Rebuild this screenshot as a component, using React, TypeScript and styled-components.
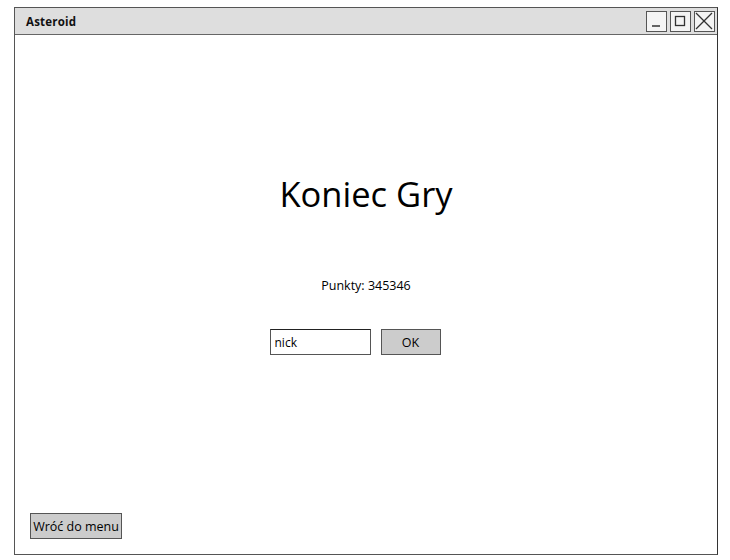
import React from "react";
import styled, { createGlobalStyle } from "styled-components";

const Global = createGlobalStyle`
  html, body { margin: 0; padding: 0; background: #fff; }
  body { width: 730px; height: 560px; overflow: hidden; font-family: "Comic Sans MS", "Open Sans", "DejaVu Sans", sans-serif; }
`;

const Page = styled.div`
  box-sizing: border-box;
  width: 730px;
  height: 560px;
  padding: 7px 12px 5px 14px;
  display: flex;
`;

const Window = styled.div`
  flex: 1;
  display: flex;
  flex-direction: column;
  border: 1.5px solid #555;
  border-right-color: #333;
  background: #fff;
`;

const TitleBar = styled.div`
  box-sizing: border-box;
  height: 27px;
  display: flex;
  align-items: center;
  justify-content: space-between;
  padding: 0 2px 0 11px;
  background: #dedede;
  border-bottom: 1.5px solid #666;
`;

const Title = styled.span`
  font-size: 11.5px;
  font-weight: bold;
  color: #111;
  letter-spacing: 0.2px;
`;

const Controls = styled.div`
  display: flex;
  gap: 2.5px;
`;

const Ctrl = styled.div`
  box-sizing: border-box;
  width: 21.5px;
  height: 21px;
  border: 1.5px solid #555;
  background: #f4f4f4;
  display: flex;
  align-items: center;
  justify-content: center;
`;

const Content = styled.div`
  flex: 1;
  display: flex;
  flex-direction: column;
  align-items: center;
  padding: 0 0 15px 0;
`;

const Heading = styled.h1`
  margin: 137px 0 0 0;
  font-size: 34.5px;
  line-height: 44px;
  font-weight: normal;
  color: #000;
`;

const Score = styled.div`
  margin-top: 62px;
  font-size: 12.5px;
  line-height: 16px;
  color: #000;
`;

const Row = styled.div`
  margin: 35px 22px 0 0;
  display: flex;
  gap: 10px;
  align-items: center;
`;

const NickInput = styled.input`
  box-sizing: border-box;
  width: 101px;
  height: 26px;
  border: 1.5px solid #555;
  border-top-color: #222;
  padding: 0 4px;
  font-family: inherit;
  font-size: 12px;
  color: #000;
  background: #fff;
  outline: none;
`;

const Button = styled.button<{ $w: number }>`
  box-sizing: border-box;
  width: ${(p) => p.$w}px;
  height: 26px;
  border: 1.5px solid #555;
  background: #cccccc;
  font-family: inherit;
  font-size: 12.5px;
  color: #000;
  padding: 0;
  cursor: pointer;
`;

const Spacer = styled.div`
  flex: 1;
`;

const Bottom = styled.div`
  align-self: flex-start;
  margin-left: 15px;
`;

export default function App() {
  return (
    <>
      <Global />
      <Page>
        <Window>
          <TitleBar>
            <Title>Asteroid</Title>
            <Controls>
              <Ctrl>
                <svg width="14" height="14" viewBox="0 0 14 14">
                  <line x1="3" y1="12" x2="11" y2="12" stroke="#333" strokeWidth="1.5" />
                </svg>
              </Ctrl>
              <Ctrl>
                <svg width="14" height="14" viewBox="0 0 14 14">
                  <rect x="2.5" y="2.5" width="9" height="9" fill="none" stroke="#333" strokeWidth="1.3" />
                </svg>
              </Ctrl>
              <Ctrl>
                <svg width="18" height="18" viewBox="0 0 18 18">
                  <line x1="1" y1="1" x2="17" y2="17" stroke="#333" strokeWidth="1.2" />
                  <line x1="17" y1="1" x2="1" y2="17" stroke="#333" strokeWidth="1.2" />
                </svg>
              </Ctrl>
            </Controls>
          </TitleBar>
          <Content>
            <Heading>Koniec Gry</Heading>
            <Score>Punkty: 345346</Score>
            <Row>
              <NickInput defaultValue="nick" />
              <Button $w={60}>OK</Button>
            </Row>
            <Spacer />
            <Bottom>
              <Button $w={92}>Wróć do menu</Button>
            </Bottom>
          </Content>
        </Window>
      </Page>
    </>
  );
}
